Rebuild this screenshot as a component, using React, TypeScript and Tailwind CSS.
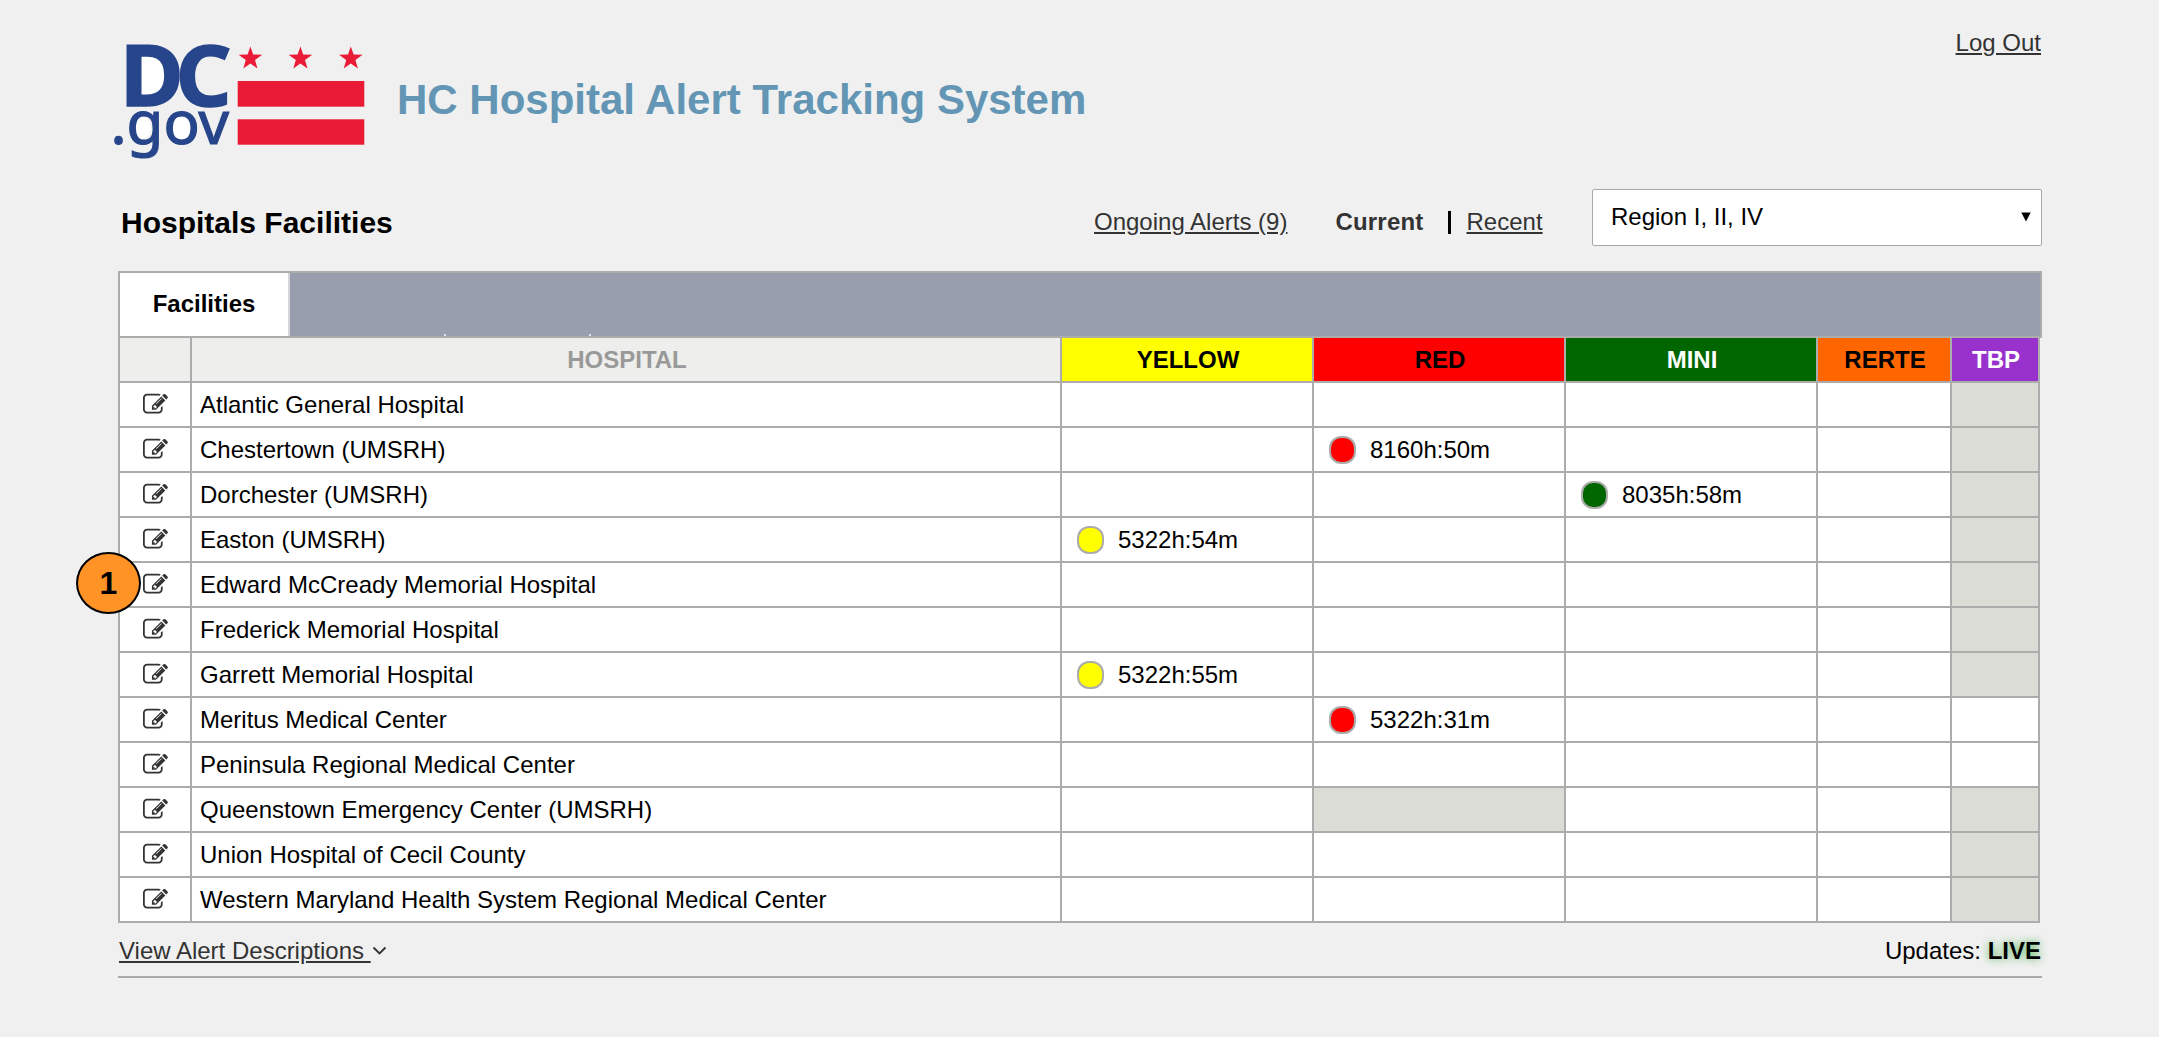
import React from 'react';

type Tone = 'yellow' | 'red' | 'mini';

interface Facility {
  name: string;
  alert?: { tone: Tone; time: string };
  redDisabled?: boolean;
  tbpOpen?: boolean;
}

const facilities: Facility[] = [
  { name: 'Atlantic General Hospital' },
  { name: 'Chestertown (UMSRH)', alert: { tone: 'red', time: '8160h:50m' } },
  { name: 'Dorchester (UMSRH)', alert: { tone: 'mini', time: '8035h:58m' } },
  { name: 'Easton (UMSRH)', alert: { tone: 'yellow', time: '5322h:54m' } },
  { name: 'Edward McCready Memorial Hospital' },
  { name: 'Frederick Memorial Hospital' },
  { name: 'Garrett Memorial Hospital', alert: { tone: 'yellow', time: '5322h:55m' } },
  { name: 'Meritus Medical Center', alert: { tone: 'red', time: '5322h:31m' }, tbpOpen: true },
  { name: 'Peninsula Regional Medical Center', tbpOpen: true },
  { name: 'Queenstown Emergency Center (UMSRH)', redDisabled: true },
  { name: 'Union Hospital of Cecil County' },
  { name: 'Western Maryland Health System Regional Medical Center' },
];

const dotColor: Record<Tone, string> = {
  yellow: 'bg-[#ffff00]',
  red: 'bg-[#ff0000]',
  mini: 'bg-[#006600]',
};

const ROW = 'grid h-[45px] grid-cols-[72px_870px_252px_252px_252px_134px_88px]';
const CELL = 'flex items-center border-r-2 border-b-2 border-[#acacac]';
const HEAD = CELL + ' justify-center pl-0.5 font-bold';

const STAR = '0,-12 2.8,-3.9 11.8,-3.7 4.6,1.6 7.1,10 0,5 -7.1,10 -4.6,1.6 -11.8,-3.7 -2.8,-3.9';

function Logo() {
  return (
    <svg width="290" height="140" viewBox="0 0 290 140" className="block shrink-0 overflow-visible">
      <rect x="38" y="24" width="26" height="44" fill="#fff" />
      <ellipse cx="60" cy="46" rx="10" ry="20" fill="#fff" />
      <ellipse cx="42" cy="98" rx="9" ry="11" fill="#fff" />
      <ellipse cx="80" cy="98.5" rx="10" ry="12" fill="#fff" />
      <g fill="#27458a" stroke="#27458a" fontFamily="'Noto Sans', sans-serif">
        <text
          transform="translate(20 76) scale(1.04 1)"
          fontSize="83.5"
          fontWeight="700"
          letterSpacing="-7.5"
          strokeWidth="1.6"
        >
          DC
        </text>
        <text x="10.5" y="114" fontSize="59.5" fontWeight="400" strokeWidth="1.2" textLength="118.5" lengthAdjust="spacingAndGlyphs">
          .gov
        </text>
      </g>
      <g fill="#ea1b36">
        <polygon points={STAR} transform="translate(150.4 28.5)" />
        <polygon points={STAR} transform="translate(200.4 28.5)" />
        <polygon points={STAR} transform="translate(250.8 28.5)" />
        <rect x="137.7" y="51" width="126.6" height="25.7" />
        <rect x="137.7" y="89.3" width="126.6" height="25.4" />
      </g>
    </svg>
  );
}

function EditIcon() {
  return (
    <svg width="25" height="25" viewBox="0 0 1792 1792" fill="#333" className="block">
      <path d="M888 1184l116-116-152-152-116 116v56h96v96h56zm440-720q-16-16-33 1l-350 350q-17 17-1 33t33-1l350-350q17-17 1-33zm80 594v190q0 119-84.5 203.5t-203.5 84.5h-832q-119 0-203.5-84.5t-84.5-203.5v-832q0-119 84.5-203.5t203.5-84.5h832q63 0 117 25 15 7 18 23 3 17-9 29l-49 49q-14 14-32 8-23-6-45-6h-832q-66 0-113 47t-47 113v832q0 66 47 113t113 47h832q66 0 113-47t47-113v-126q0-13 9-22l64-64q15-15 35-7t20 29zm-96-738l288 288-672 672h-288v-288zm444 132l-92 92-288-288 92-92q28-28 68-28t68 28l152 152q28 28 28 68t-28 68z" />
    </svg>
  );
}

function AlertCell({ facility, tone }: { facility: Facility; tone: Tone }) {
  const alert = facility.alert?.tone === tone ? facility.alert : undefined;
  const disabled = tone === 'red' && facility.redDisabled;
  return (
    <div className={`${CELL} pl-[15px] ${disabled ? 'bg-[#dbdcd5]' : 'bg-white'}`}>
      {alert && (
        <>
          <span className={`h-7 w-[27px] rounded-[12px] border-2 border-[#acacac] ${dotColor[tone]}`} />
          <span className="ml-[14px]">{alert.time}</span>
        </>
      )}
    </div>
  );
}

export default function App() {
  return (
    <div className="h-[1037px] w-[2159px] overflow-hidden bg-[#f0f0f0] font-['Liberation_Sans',Arial,sans-serif] text-2xl leading-7 text-black">
      <header className="flex h-[189px] items-start pr-[118px] pl-[100px]">
        <div className="pt-[30px]">
          <Logo />
        </div>
        <h1 className="mt-[76px] ml-[7px] text-[42px] leading-[48px] font-bold whitespace-nowrap text-[#6395b4]">
          HC Hospital Alert Tracking System
        </h1>
        <a className="mt-[29px] ml-auto text-[#333] underline">Log Out</a>
      </header>

      <section className="flex h-[82px] items-start pr-[117px] pl-[121px]">
        <h2 className="mt-[17px] w-[973px] text-[30px] leading-[34px] font-bold">Hospitals Facilities</h2>
        <nav className="mt-[19px] flex w-[498px] whitespace-nowrap text-[#333]">
          <a className="underline">Ongoing Alerts (9)</a>
          <span className="ml-[48px] font-bold tracking-[0.2px]">Current</span>
          <span className="mt-[3px] ml-[24px] h-[23px] w-[3px] bg-black" />
          <a className="ml-4 underline">Recent</a>
        </nav>
        <div className="flex h-[57px] w-[450px] items-center justify-between rounded-[2px] border border-[#a9a9a9] bg-white pr-[10px] pb-[2px] pl-[18px]">
          <span>Region I, II, IV</span>
          <svg width="10" height="10" viewBox="0 0 10 10">
            <path d="M.3.5h9.4L5 9.5z" />
          </svg>
        </div>
      </section>

      <main className="relative ml-[118px] w-[1924px]">
        <div className="flex h-[67px] border-2 border-[#acacac] bg-[#999eae]">
          <div className="flex w-[170px] items-center justify-center border-r-2 border-[#d4d5d9] bg-white pb-[2px] font-bold">
            Facilities
          </div>
          <div className="flex items-end">
            <span className="ml-[154px] h-[2px] w-[2px] bg-[#e4e4e4]" />
            <span className="ml-[143px] h-[2px] w-[2px] bg-[#e4e4e4]" />
          </div>
        </div>

        <div className="w-[1922px] border-l-2 border-[#acacac]">
          <div className={ROW}>
            <div className={`${HEAD} bg-[#eeeeec]`} />
            <div className={`${HEAD} bg-[#eeeeec] text-[#999]`}>HOSPITAL</div>
            <div className={`${HEAD} bg-[#ffff00]`}>YELLOW</div>
            <div className={`${HEAD} bg-[#ff0000]`}>RED</div>
            <div className={`${HEAD} bg-[#006600] text-white`}>MINI</div>
            <div className={`${HEAD} bg-[#ff6600]`}>RERTE</div>
            <div className={`${HEAD} bg-[#9932cc] text-white`}>TBP</div>
          </div>
          {facilities.map((f) => (
            <div key={f.name} className={ROW}>
              <div className={`${CELL} justify-center bg-white`}>
                <EditIcon />
              </div>
              <div className={`${CELL} bg-white pl-2`}>{f.name}</div>
              <AlertCell facility={f} tone="yellow" />
              <AlertCell facility={f} tone="red" />
              <AlertCell facility={f} tone="mini" />
              <div className={`${CELL} bg-white`} />
              <div className={`${CELL} ${f.tbpOpen ? 'bg-white' : 'bg-[#dbdcd5]'}`} />
            </div>
          ))}
        </div>

        <span className="absolute top-[281px] -left-[42px] flex h-[62px] w-[65px] items-center justify-center rounded-[50%] border-2 border-black bg-[#ff9326] text-[32px] font-bold">
          1
        </span>
      </main>

      <footer className="ml-[118px] flex h-[55px] w-[1924px] items-start justify-between border-b-2 border-[#a9a9a9] pt-[14px] pr-px pl-px">
        <a className="flex text-[#333]">
          <span className="whitespace-pre underline">View Alert Descriptions </span>
          <svg width="15" height="10" viewBox="0 0 15 10" fill="none" stroke="#333" strokeWidth="1.8" className="mt-[9px] ml-px">
            <path d="M1.5 1.5l6 6 6-6" />
          </svg>
        </a>
        <div>
          Updates: <b className="[text-shadow:0_0_8px_#4caf50]">LIVE</b>
        </div>
      </footer>
    </div>
  );
}
